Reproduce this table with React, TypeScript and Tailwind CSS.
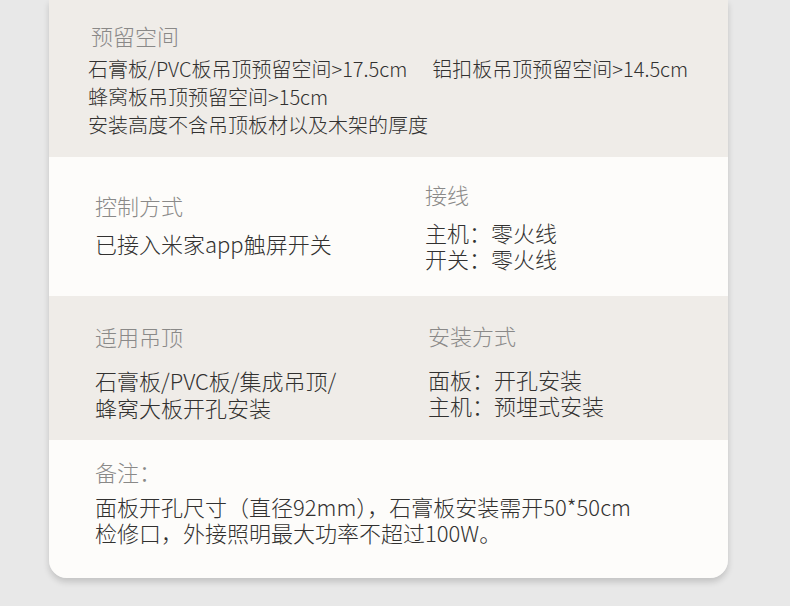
import React from 'react';

const title = "text-[22px] leading-[28px] text-[#8a8988]";
const body = "text-[22px] text-[#323130]";

export default function App() {
  return (
    <div className="w-[790px] h-[606px] bg-[#e8e8e8] font-['Noto_Sans_CJK_SC','Noto_Sans',sans-serif] font-light overflow-hidden">
      <div className="ml-[49px] w-[679px] rounded-b-[18px] overflow-hidden shadow-[0_4px_6px_rgba(0,0,0,0.16)]">
        {/* 预留空间 */}
        <div className="h-[157px] bg-[#efece8] pl-[39px] pt-[21px]">
          <p className={`${title} pl-[3px]`}>预留空间</p>
          <div className="mt-[6px] text-[20px] leading-[28px] text-[#323130]">
            <p>
              石膏板/PVC板吊顶预留空间&gt;17.5cm
              <span className="ml-[25px]">铝扣板吊顶预留空间&gt;14.5cm</span>
            </p>
            <p>蜂窝板吊顶预留空间&gt;15cm</p>
            <p>安装高度不含吊顶板材以及木架的厚度</p>
          </div>
        </div>

        {/* 控制方式 / 接线 */}
        <div className="h-[139px] bg-[#fdfcfa] pl-[46px] grid grid-cols-[330px_1fr]">
          <div className="pt-[34px]">
            <p className={title}>控制方式</p>
            <p className={`${body} leading-[26px] mt-[11px]`}>已接入米家app触屏开关</p>
          </div>
          <div className="pt-[23px]">
            <p className={title}>接线</p>
            <div className={`${body} leading-[26px] mt-[11px]`}>
              <p>主机：零火线</p>
              <p>开关：零火线</p>
            </div>
          </div>
        </div>

        {/* 适用吊顶 / 安装方式 */}
        <div className="h-[144px] bg-[#efece8] pl-[46px] grid grid-cols-[333px_1fr]">
          <div className="pt-[26px]">
            <p className={title}>适用吊顶</p>
            <div className={`${body} leading-[27px] mt-[17px]`}>
              <p>石膏板/PVC板/集成吊顶/</p>
              <p>蜂窝大板开孔安装</p>
            </div>
          </div>
          <div className="pt-[25px]">
            <p className={title}>安装方式</p>
            <div className={`${body} leading-[26px] mt-[17px]`}>
              <p>面板：开孔安装</p>
              <p>主机：预埋式安装</p>
            </div>
          </div>
        </div>

        {/* 备注 */}
        <div className="h-[138px] bg-[#fdfcfa] pl-[46px] pt-[17px]">
          <p className={title}>备注：</p>
          <div className={`${body} leading-[26px] mt-[8px]`}>
            <p>面板开孔尺寸（直径92mm），石膏板安装需开50*50cm</p>
            <p>检修口，外接照明最大功率不超过100W。</p>
          </div>
        </div>
      </div>
    </div>
  );
}
